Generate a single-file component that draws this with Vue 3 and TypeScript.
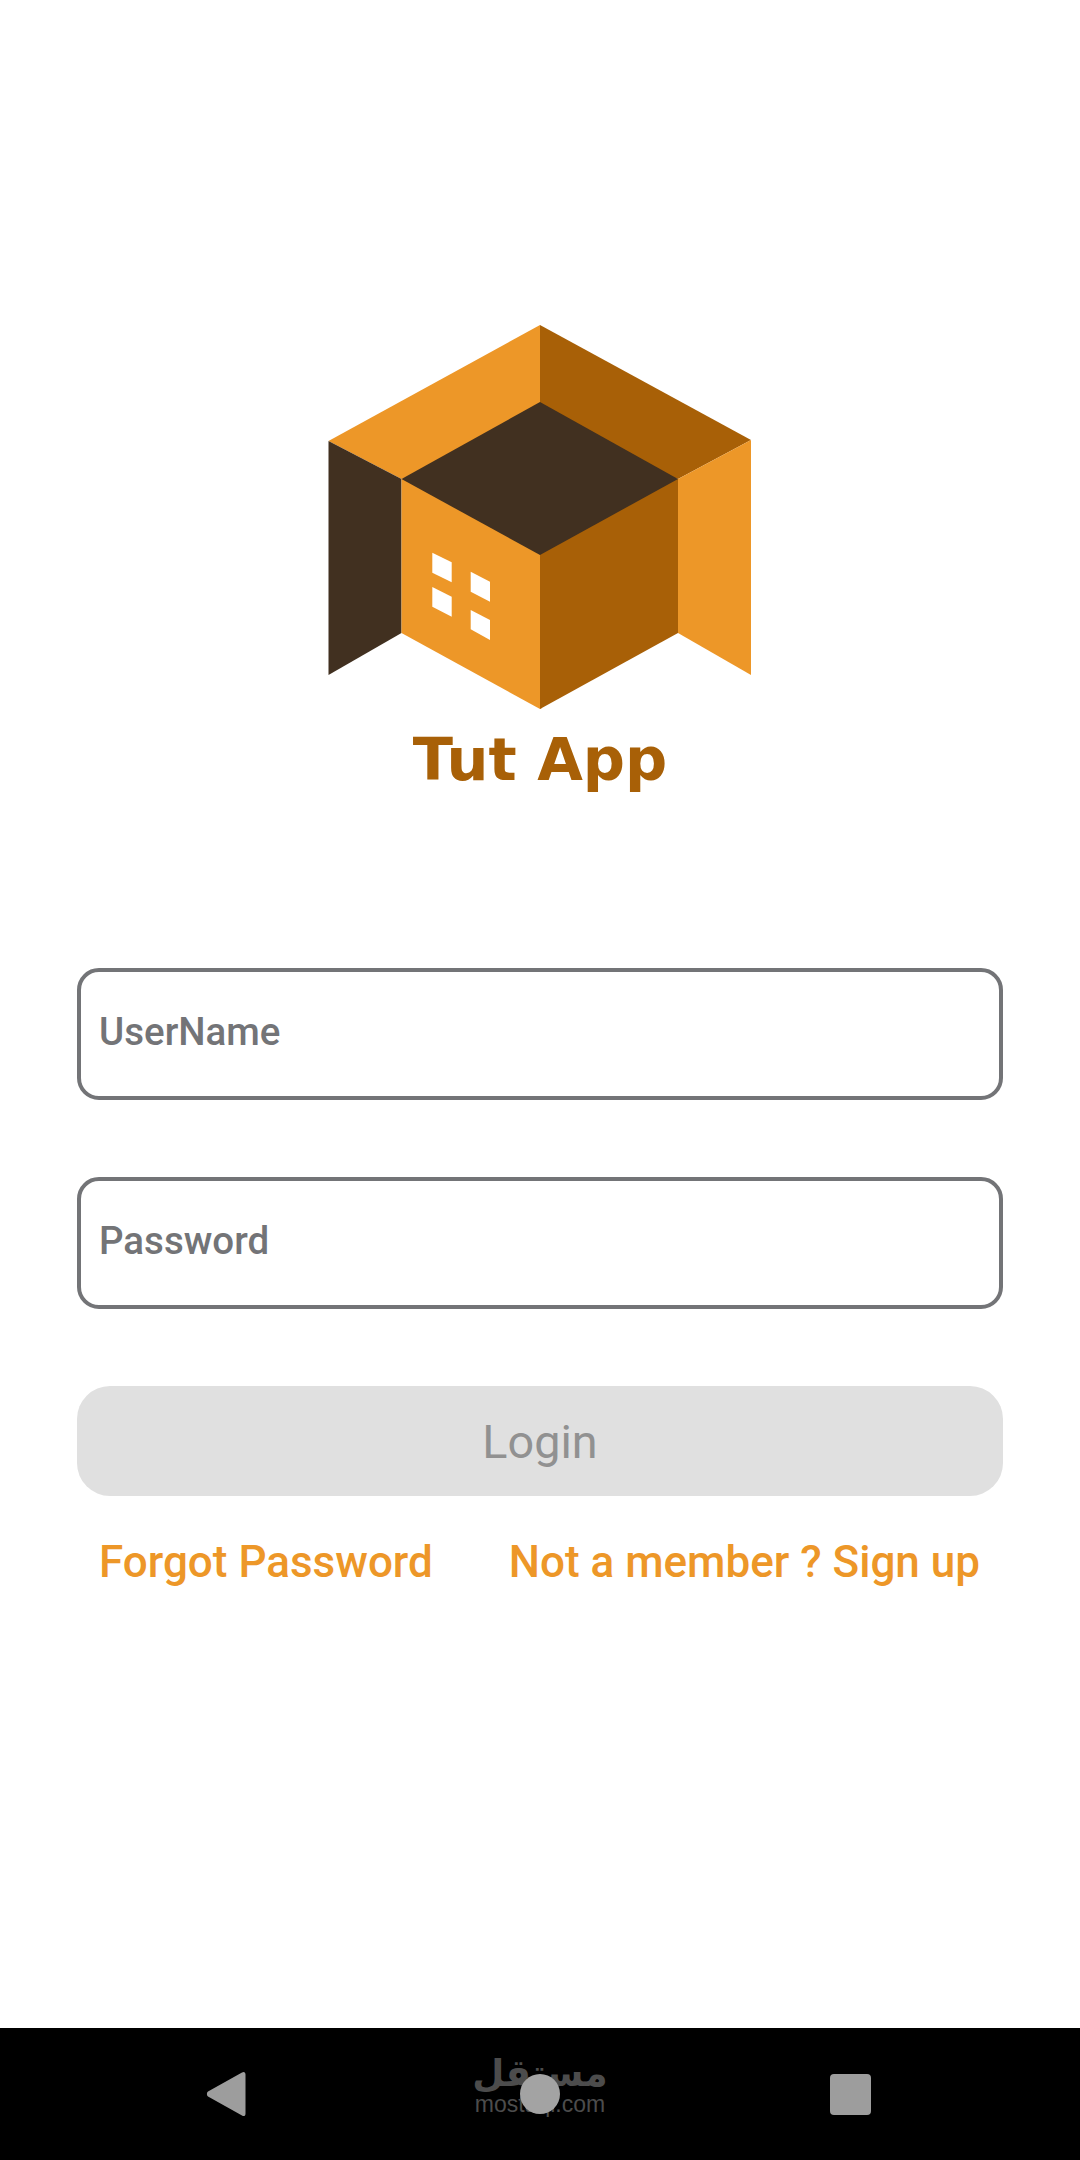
<script setup lang="ts">
import { computed, ref } from 'vue'

const username = ref('')
const password = ref('')

const canLogin = computed(() => username.value !== '' && password.value !== '')
</script>

<template>
  <div class="screen">
    <main class="content">
      <div class="brand">
        <svg class="logo" width="424" height="384" viewBox="0 0 424 384" role="img" aria-label="Tut App logo">
          <!-- back walls, they run on under the roof so no seam shows -->
          <polygon class="orange" points="212,0 0.5,116 73.5,154 214,120 214,77" />
          <polygon class="brown" points="212,0 423,115 350,154 212,120" />
          <!-- side wings -->
          <polygon class="dark" points="0.5,116 73.5,154 73.5,308 0.5,350" />
          <polygon class="orange" points="423,115 350,154 350,308 423,350" />
          <!-- front faces -->
          <polygon class="orange" points="73.5,154 214,154 214,383 212,384 73.5,308" />
          <polygon class="brown" points="350,154 212,154 212,384 350,308" />
          <!-- roof -->
          <polygon class="dark" points="212,77 350,154 212,230 73.5,154" />
          <!-- windows -->
          <polygon class="window" points="104.3,227.7 123.7,237.3 123.7,257.3 104.3,247.7" />
          <polygon class="window" points="142.7,246.7 162,256.7 162,276.7 142.7,266.7" />
          <polygon class="window" points="104.3,262 123.7,271.7 123.7,291.7 104.3,281.7" />
          <polygon class="window" points="142.7,285 162,295 162,315 142.7,304.3" />
        </svg>
        <h1 class="title">Tut App</h1>
      </div>

      <form class="form" @submit.prevent>
        <input v-model="username" class="field" type="text" placeholder="UserName" />
        <input v-model="password" class="field" type="password" placeholder="Password" />
        <button class="login" type="submit" :disabled="!canLogin">Login</button>
        <div class="links">
          <a class="link" href="#">Forgot Password</a>
          <a class="link" href="#">Not a member ? Sign up</a>
        </div>
      </form>
    </main>

    <nav class="navbar">
      <svg class="nav-back" width="40" height="46" viewBox="0 0 40 46">
        <path d="M36 1.5c1.800-1.300 3.500-.5 3.500 2v39c0 2.500-1.700 3.300-3.500 2L2 25.500c-1.500-1.200-1.500-3.800 0-5z" />
      </svg>
      <div class="nav-home">
        <div class="watermark">
          <span class="watermark-ar">مستقل</span>
          <span class="watermark-en">mostaql.com</span>
        </div>
        <span class="nav-circle"></span>
      </div>
      <span class="nav-square"></span>
    </nav>
  </div>
</template>

<style scoped>
.screen {
  display: flex;
  flex-direction: column;
  width: 1080px;
  height: 2160px;
  background: #ffffff;
  font-family: Roboto, "Noto Sans", sans-serif;
}

.content {
  flex: 1;
  padding: 325px 77px 0;
}

.brand {
  display: flex;
  flex-direction: column;
  align-items: center;
}

.logo {
  display: block;
}

.orange {
  fill: #ed9728;
}

.brown {
  fill: #a86007;
}

.dark {
  fill: #413020;
}

.window {
  fill: #ffffff;
}

.title {
  margin: 14px 0 0;
  font-family: "DejaVu Sans", Inter, sans-serif;
  font-size: 59px;
  font-weight: 700;
  line-height: 74px;
  color: #a86007;
}

.form {
  display: flex;
  flex-direction: column;
  gap: 77px;
  margin-top: 171px;
}

.field {
  box-sizing: border-box;
  width: 100%;
  height: 132px;
  padding: 0 18px 6px;
  border: 4px solid #737477;
  border-radius: 22px;
  outline: none;
  background: transparent;
  font-family: inherit;
  font-size: 38.5px;
  font-weight: 500;
  color: #737477;
}

.field::placeholder {
  color: #737477;
  opacity: 1;
}

.login {
  height: 110px;
  padding: 2px 0 0;
  border: none;
  border-radius: 33px;
  background: #e0e0e0;
  font-family: inherit;
  font-size: 46.75px;
  font-weight: 400;
  color: #919191;
}

.links {
  display: flex;
  justify-content: space-between;
  margin-top: -37px;
  padding: 0 23px 0 22px;
}

.link {
  font-size: 44px;
  font-weight: 500;
  line-height: 52px;
  color: #ed9728;
  text-decoration: none;
}

.navbar {
  display: grid;
  grid-template-columns: 314px 310px auto;
  align-items: center;
  box-sizing: border-box;
  height: 132px;
  padding-left: 206px;
  background: #000000;
}

.nav-back {
  display: block;
  fill: #9d9d9d;
}

.nav-home {
  position: relative;
  width: 40px;
  height: 40px;
}

.nav-circle {
  position: absolute;
  inset: 0;
  border-radius: 50%;
  background: #a3a3a3;
}

.watermark {
  position: absolute;
  top: -20px;
  left: 50%;
  display: flex;
  flex-direction: column;
  align-items: center;
  width: 132px;
  margin-left: -66px;
  color: #4c4c4c;
}

.watermark-ar {
  font-family: "DejaVu Sans", sans-serif;
  font-size: 37px;
  font-weight: 700;
  line-height: 40px;
}

.watermark-en {
  margin-top: 0;
  font-family: "Liberation Sans", sans-serif;
  font-size: 23px;
  line-height: 20px;
}

.nav-square {
  width: 41px;
  height: 41px;
  border-radius: 4px;
  background: #9d9d9d;
}
</style>

<style>
body {
  background: #ffffff;
}
</style>
